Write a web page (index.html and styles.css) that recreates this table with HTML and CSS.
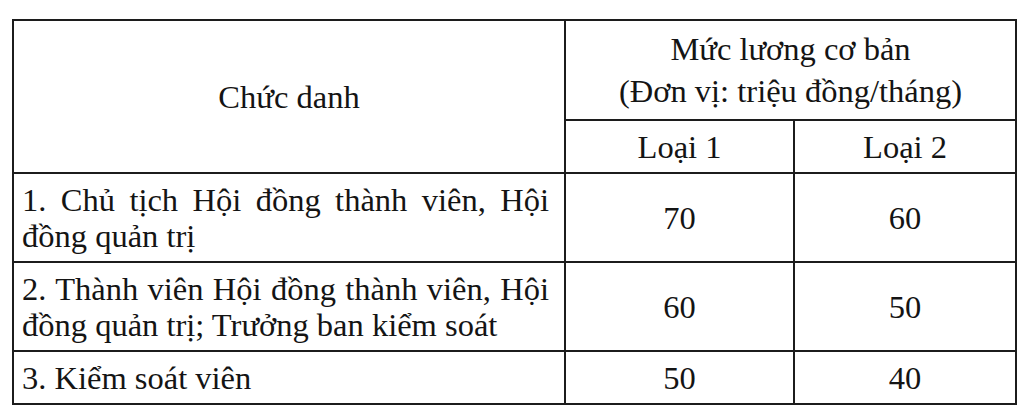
FILE: index.html
```html
<!DOCTYPE html>
<html lang="vi">
<head>
<meta charset="utf-8">
<title>Mức lương cơ bản</title>
<link rel="stylesheet" href="styles.css">
</head>
<body>
<table class="salary">
  <colgroup>
    <col class="c-title">
    <col class="c-l1">
    <col class="c-l2">
  </colgroup>
  <tr class="r-head1">
    <th rowspan="2" class="center">Chức danh</th>
    <th colspan="2" class="center head-wide">Mức lương cơ bản<br>(Đơn vị: triệu đồng/tháng)</th>
  </tr>
  <tr class="r-head2">
    <th class="center">Loại 1</th>
    <th class="center">Loại 2</th>
  </tr>
  <tr class="r-two">
    <td class="title">1. Chủ tịch Hội đồng thành viên, Hội đồng quản trị</td>
    <td class="center">70</td>
    <td class="center">60</td>
  </tr>
  <tr class="r-two">
    <td class="title">2. Thành viên Hội đồng thành viên, Hội đồng quản trị; Trưởng ban kiểm soát</td>
    <td class="center">60</td>
    <td class="center">50</td>
  </tr>
  <tr class="r-one">
    <td class="title">3. Kiểm soát viên</td>
    <td class="center">50</td>
    <td class="center">40</td>
  </tr>
</table>
</body>
</html>
```
FILE: styles.css
```css
html, body {
  margin: 0;
  padding: 0;
  background: #ffffff;
}
body {
  padding: 19px 0 0 12px;
  font-family: "Liberation Serif", "Times New Roman", serif;
  color: #141414;
}
.salary {
  border-collapse: collapse;
  table-layout: fixed;
  width: 1003px;
  font-family: "Liberation Serif", "Times New Roman", serif;
  font-size: 32.5px;
  line-height: 36px;
}
.c-title { width: 552px; }
.c-l1 { width: 229px; }
.c-l2 { width: 222px; }
.salary th,
.salary td {
  border: 2px solid #1c1c1c;
  padding: 7px 10px;
  font-weight: normal;
  vertical-align: middle;
  font-family: inherit;
}
.center { text-align: center; }
.salary td.title {
  text-align: justify;
  padding: 7px 15px 7px 8px;
}
.head-wide { line-height: 42px; }
.r-head1 { height: 97px; }
.r-head2 { height: 53px; }
.r-two { height: 89px; }
.r-one { height: 53px; }
```
